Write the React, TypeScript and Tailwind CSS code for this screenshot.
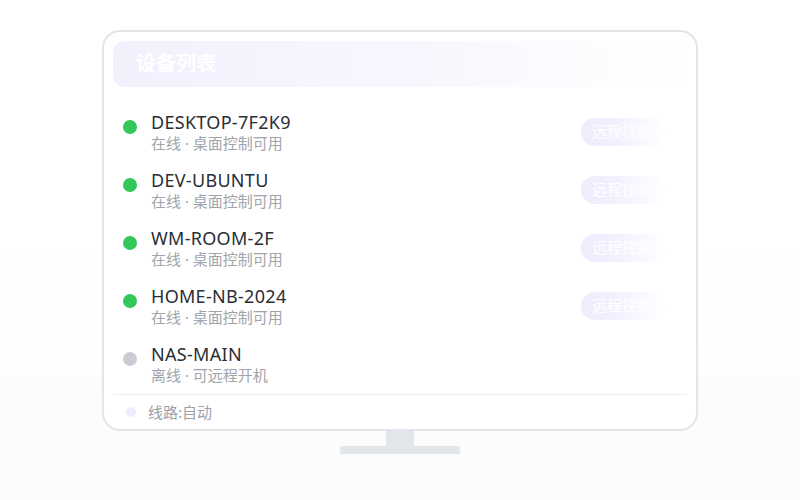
import React from 'react'

type Device = {
  name: string
  status: string
  online: boolean
}

const devices: Device[] = [
  { name: 'DESKTOP-7F2K9', status: '在线 · 桌面控制可用', online: true },
  { name: 'DEV-UBUNTU', status: '在线 · 桌面控制可用', online: true },
  { name: 'WM-ROOM-2F', status: '在线 · 桌面控制可用', online: true },
  { name: 'HOME-NB-2024', status: '在线 · 桌面控制可用', online: true },
  { name: 'NAS-MAIN', status: '离线 · 可远程开机', online: false },
]

const sans = "font-['Noto_Sans','Noto_Sans_CJK_SC',sans-serif]"

function DeviceRow({ d }: { d: Device }) {
  return (
    <li className="flex h-[58px] items-center pl-[10px] pr-[22px]">
      <div className="flex flex-1 items-start gap-[14px]">
        <span
          className={
            'mt-[9px] h-[14px] w-[14px] shrink-0 rounded-full ' +
            (d.online ? 'bg-[#34c759]' : 'bg-[#c9ccd2]')
          }
        />
        <div className="flex flex-col">
          <div className="text-[18px] leading-[22px] tracking-[0.3px] text-[#2a2e35]">
            {d.name}
          </div>
          <div className="text-[15px] leading-[21px] text-[#a0a4ab]">{d.status}</div>
        </div>
      </div>
      {d.online && (
        <button
          type="button"
          className="h-[28px] w-[84px] rounded-full bg-gradient-to-r from-[#eeebfd] via-[#f4f2fe] to-white pl-[11px] text-left font-['Liberation_Serif','Noto_Sans_CJK_SC',serif] text-[15px] text-white"
        >
          远程控制
        </button>
      )}
    </li>
  )
}

export default function App() {
  return (
    <div
      className={
        'flex h-[500px] w-[800px] flex-col items-center bg-gradient-to-b from-white via-white to-[#fbfbfc] pt-[30px] ' +
        sans
      }
    >
      {/* screen */}
      <div className="flex h-[401px] w-[596px] flex-col rounded-[18px] border-2 border-[#e4e5ea] bg-white px-[9px] pt-[9px]">
        <div className="flex h-[46px] items-center justify-between rounded-[12px] bg-gradient-to-r from-[#f3f0fe] via-[#f8f6fe] to-white pl-[23px] pr-[20px]">
          <span className="text-[20px] font-bold text-white">设备列表</span>
          <span className="text-[15px] text-white">共 5 台</span>
        </div>

        <ul className="mt-[16px] flex flex-col">
          {devices.map((d) => (
            <DeviceRow key={d.name} d={d} />
          ))}
        </ul>

        <div className="mt-[1px] flex flex-1 items-center gap-[12px] border-t border-[#eeeef2] pl-[13px]">
          <span className="h-[10px] w-[10px] rounded-full bg-[#efecfd]" />
          <span className="text-[15px] text-[#9ca0a8]">线路:自动</span>
        </div>
      </div>

      {/* stand */}
      <div className="h-[15px] w-[28px] bg-[#e2e6eb]" />
      <div className="h-[8px] w-[120px] bg-[#e2e6eb]" />
    </div>
  )
}
